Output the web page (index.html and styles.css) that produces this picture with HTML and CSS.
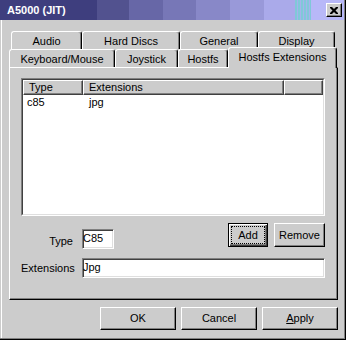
FILE: index.html
```html
<!DOCTYPE html>
<html lang="en">

<head>
  <meta charset="UTF-8">
  <meta name="viewport" content="width=device-width, initial-scale=1.0">
  <title>A5000 (JIT)</title>
  <link rel="stylesheet" href="styles.css">
</head>

<body>
  <div class="window">
    <div class="titlebar">
      <span class="title">A5000 (JIT)</span>
      <button class="close" aria-label="Close">
        <svg width="8" height="7" viewBox="0 0 8 7">
          <path d="M0 0h2l2 2 2-2h2v1L5.5 3.5 8 6v1H6L4 5 2 7H0V6l2.5-2.5L0 1z" fill="#000"/>
        </svg>
      </button>
    </div>

    <div class="client">
      <!-- back row of tabs -->
      <div class="tabrow back">
        <div class="tab audio">Audio</div>
        <div class="tab discs">Hard Discs</div>
        <div class="tab general">General</div>
        <div class="tab display">Display</div>
      </div>
      <!-- front row of tabs -->
      <div class="tabrow front">
        <div class="tab keyboard">Keyboard/Mouse</div>
        <div class="tab joystick">Joystick</div>
        <div class="tab hostfs">Hostfs</div>
        <div class="tab hostfs-ext active">Hostfs Extensions</div>
      </div>

      <div class="panel">
        <div class="listview">
          <div class="listbox">
            <div class="lv-head">
              <div class="col c-type">Type</div>
              <div class="col c-ext">Extensions</div>
              <div class="col c-fill"></div>
            </div>
            <div class="lv-row">
              <div class="cell c-type">c85</div>
              <div class="cell c-ext">jpg</div>
            </div>
          </div>
        </div>

        <div class="form-row first">
          <label class="lbl type-lbl" for="type">Type</label>
          <input class="field type-field" id="type" value="C85">
          <div class="actions">
            <button class="btn default"><span class="focus">Add</span></button>
            <button class="btn remove">Remove</button>
          </div>
        </div>

        <div class="form-row second">
          <label class="lbl" for="ext">Extensions</label>
          <input class="field ext-field" id="ext" value="Jpg">
        </div>
      </div>

      <div class="footer">
        <button class="btn wide">OK</button>
        <button class="btn wide">Cancel</button>
        <button class="btn wide"><u>A</u>pply</button>
      </div>
    </div>
  </div>
</body>

</html>
```

FILE: styles.css
```css
* {
  box-sizing: border-box;
}

body {
  margin: 0;
  font: 11px/13px "Liberation Sans", Arial, sans-serif;
  color: #000;
}

.window {
  width: 346px;
  height: 340px;
  background: #cccccc;
  border-right: 1px solid #000;
  border-bottom: 1px solid #000;
  box-shadow: inset -1px -1px #808080;
}

/* title bar */
.titlebar {
  display: flex;
  align-items: center;
  height: 20px;
  margin-right: 1px;
  padding-left: 7px;
  background:
    repeating-linear-gradient(to right, #80c8d8 0 2px, #a4b4ec 2px 3px) 295px 0 / 16px 100% no-repeat,
    linear-gradient(to right,
      #3e3e7e 0 97px,
      #52528f 97px 129px,
      #6767a7 129px 163px,
      #7777b7 163px 196px,
      #8888c8 196px 230px,
      #9999d9 230px 264px,
      #aaaaea 264px 295px,
      #b8b8f8 295px);
}

.title {
  color: #fff;
  font-weight: bold;
}

.close {
  display: flex;
  align-items: center;
  justify-content: center;
  width: 16px;
  height: 14px;
  margin: 0 2px 0 auto;
  padding: 0;
  background: #cccccc;
  border: 1px solid;
  border-color: #fff #000 #000 #fff;
  box-shadow: inset -1px -1px #808080;
}

.client {
  height: 318px;
  border-left: 1px solid #cccccc;
  box-shadow: inset 1px 0 #fff;
  padding: 11px 0 0 8px;
}

/* tabs */
.tabrow {
  display: flex;
  align-items: flex-end;
}

.tabrow.back {
  margin-left: 2px;
}

.tab {
  flex: none;
  height: 18px;
  padding-top: 3px;
  text-align: center;
  white-space: nowrap;
  border: 1px solid;
  border-bottom: 0;
  border-color: #fff #000 transparent #fff;
  border-radius: 3px 3px 0 0;
  box-shadow: inset -1px 0 #808080;
}

.audio { width: 71px; }
.discs { width: 98px; }
.general { width: 78px; }
.display { width: 77px; }
.keyboard { width: 106px; }
.joystick { width: 63px; }
.hostfs { width: 50px; }
.hostfs-ext { width: 109px; }

.tab.active {
  position: relative;
  z-index: 1;
  height: 21px;
  margin: -2px 0 -1px;
  background: #cccccc;
}

/* page */
.panel {
  width: 329px;
  height: 233px;
  border: 1px solid;
  border-color: #fff #000 #000 #fff;
  box-shadow: inset -1px -1px #808080;
  padding: 10px 0 0 11px;
}

.listview {
  width: 304px;
  height: 138px;
  border: 1px solid;
  border-color: #808080 #fff #fff #808080;
}

.listbox {
  height: 100%;
  background: #fff;
  border: 1px solid;
  border-color: #404040 #dfdfdf #dfdfdf #404040;
}

.lv-head {
  display: flex;
  height: 15px;
}

.col {
  background: #cccccc;
  border: 1px solid;
  border-color: #fff #404040 #404040 #fff;
  box-shadow: inset -1px -1px #808080;
  padding-left: 5px;
}

.c-type {
  width: 60px;
}

.c-ext {
  width: 201px;
}

.c-fill {
  flex: 1;
}

.lv-row {
  display: flex;
  padding-top: 1px;
}

.cell.c-type {
  padding-left: 4px;
}

.cell.c-ext {
  padding-left: 6px;
}

/* fields */
.form-row {
  display: flex;
  width: 304px;
}

.form-row.first {
  margin-top: 7px;
  align-items: flex-start;
}

.form-row.second {
  margin-top: 9px;
  align-items: center;
}

.lbl {
  width: 52px;
  margin-right: 9px;
  text-align: right;
  white-space: nowrap;
}

.type-lbl {
  margin-top: 12px;
}

.field {
  height: 20px;
  padding: 0 0 3px;
  font: inherit;
  color: #000;
  background: #fff;
  border: 1px solid;
  border-color: #808080 #fff #fff #808080;
  box-shadow: inset 1px 1px #404040, inset -1px -1px #dfdfdf;
  outline: none;
}

.type-field {
  width: 32px;
  margin-top: 6px;
}

.ext-field {
  width: 243px;
}

.actions {
  display: flex;
  gap: 6px;
  margin-left: auto;
}

/* buttons */
.btn {
  height: 24px;
  padding: 0;
  font: inherit;
  color: #000;
  background: #cccccc;
  border: 1px solid;
  border-color: #fff #000 #000 #fff;
  box-shadow: inset -1px -1px #808080;
}

.btn.default {
  width: 40px;
  border-color: #000;
  box-shadow: inset 1px 1px #fff, inset -1px -1px #404040, inset -2px -2px #808080;
}

.focus {
  display: block;
  height: 18px;
  margin: 2px;
  line-height: 16px;
  border: 1px dotted #000;
}

.btn.remove {
  width: 51px;
}

.footer {
  display: flex;
  justify-content: flex-end;
  gap: 5px;
  width: 329px;
  margin-top: 7px;
}

.btn.wide {
  width: 76px;
  height: 23px;
}
```
